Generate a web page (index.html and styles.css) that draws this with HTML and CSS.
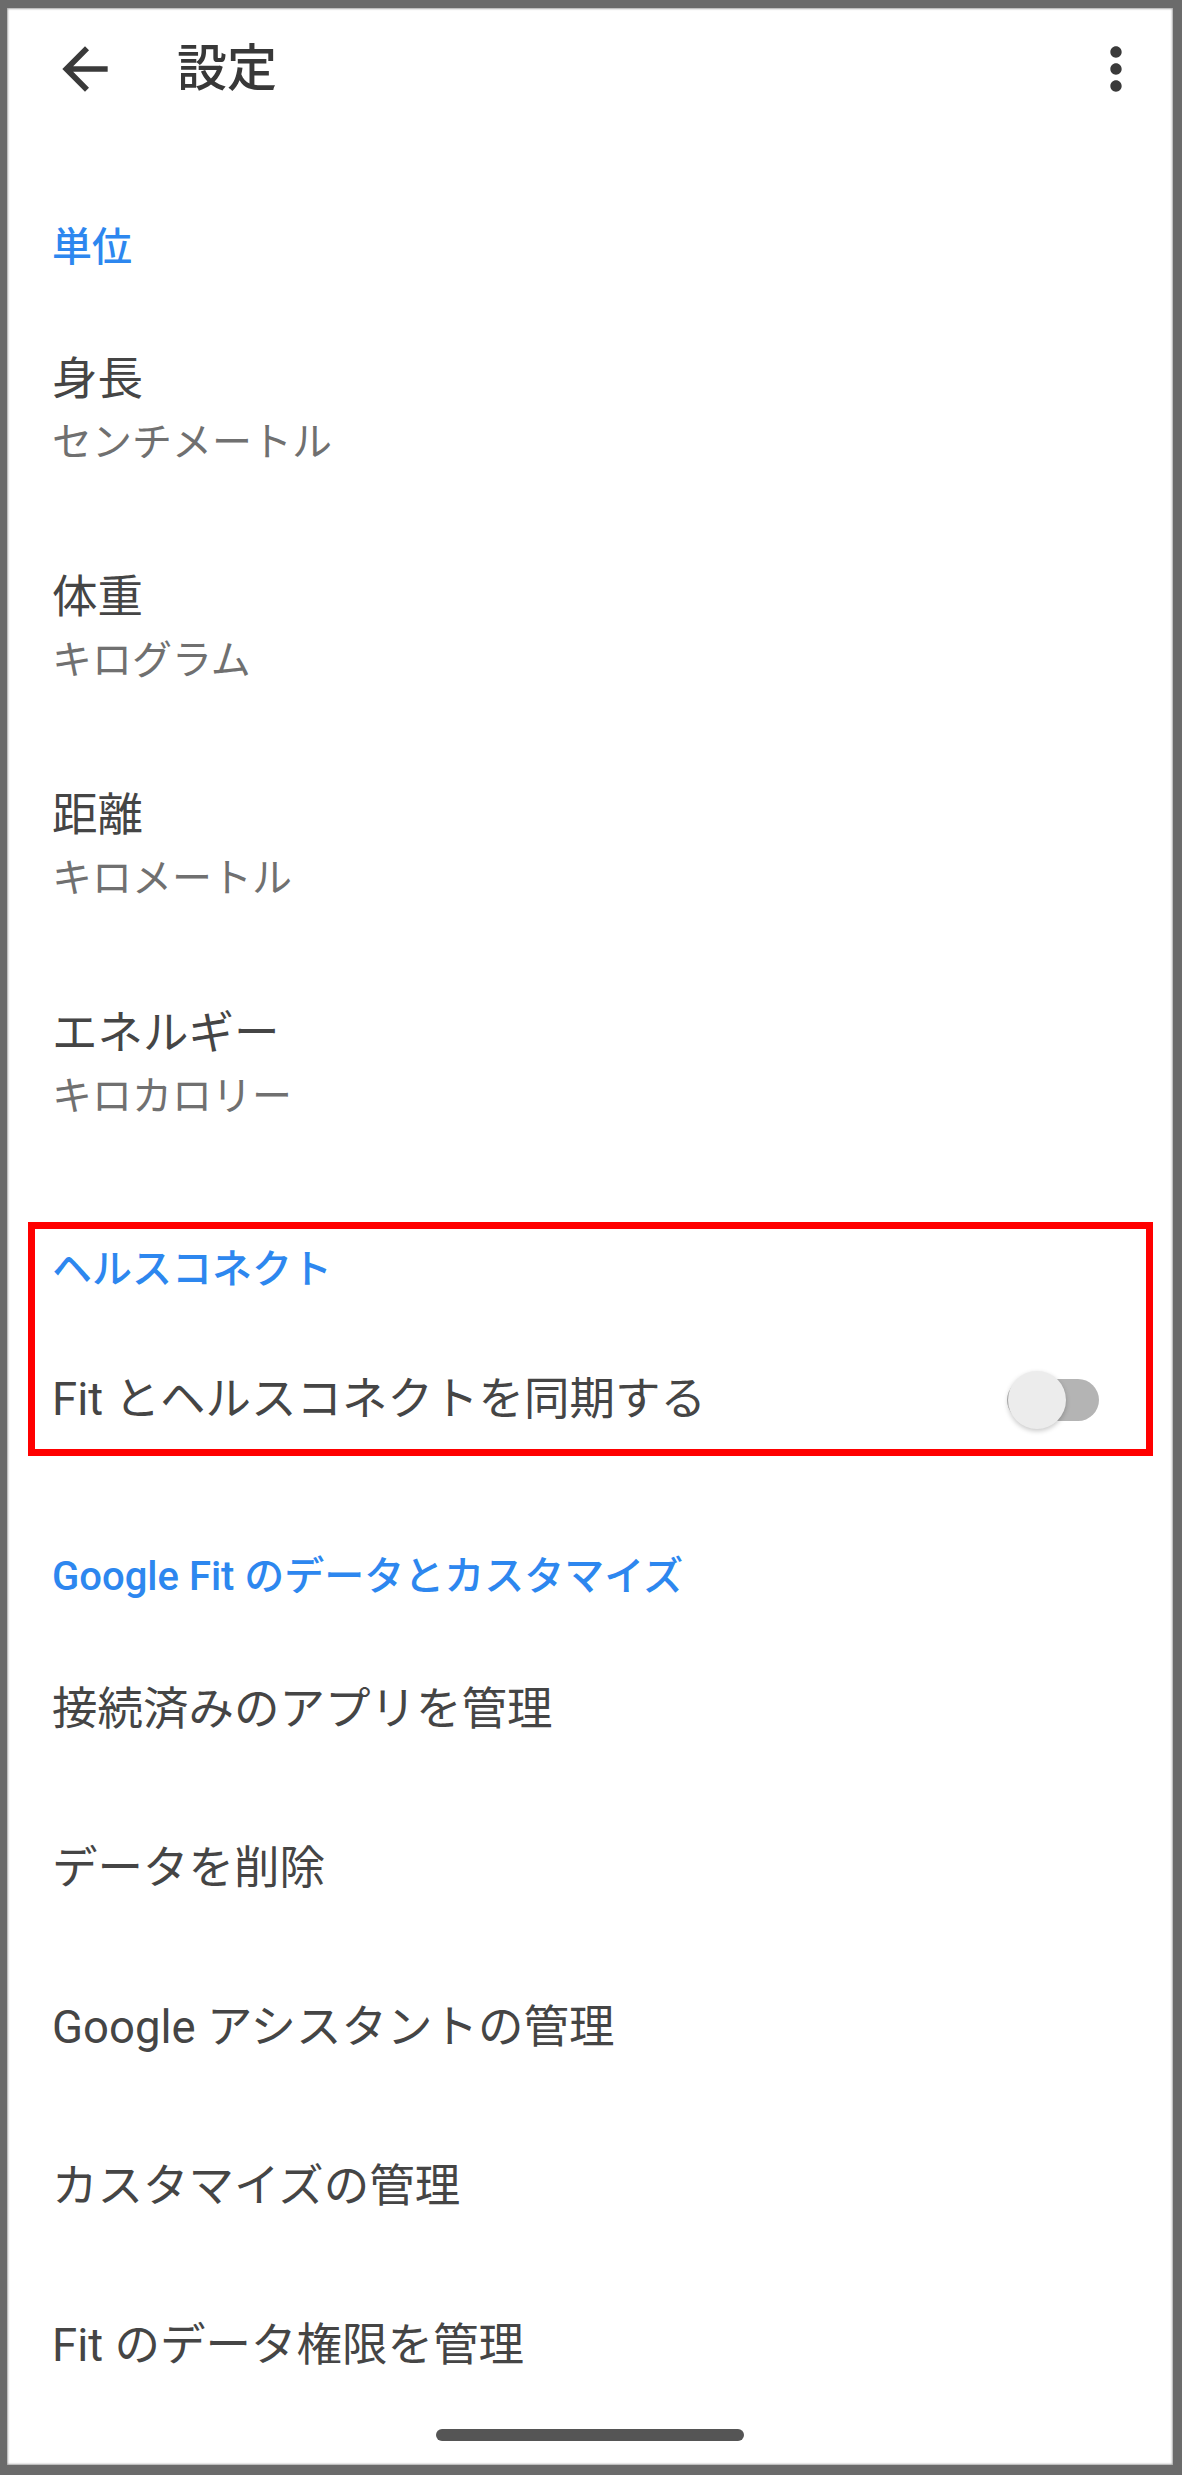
FILE: index.html
```html
<!DOCTYPE html>
<html lang="ja">
<head>
<meta charset="utf-8">
<title>設定</title>
<link rel="stylesheet" href="styles.css">
</head>
<body>
<div class="screen">
  <header class="toolbar">
    <svg class="icon back" viewBox="0 0 24 24" aria-hidden="true"><path d="M20 11H7.83l5.59-5.59L12 4l-8 8 8 8 1.41-1.41L7.83 13H20v-2z"/></svg>
    <h1 class="title">設定</h1>
    <svg class="icon more" viewBox="0 0 24 24" aria-hidden="true"><path d="M12 8c1.1 0 2-.9 2-2s-.9-2-2-2-2 .9-2 2 .9 2 2 2zm0 2c-1.1 0-2 .9-2 2s.9 2 2 2 2-.9 2-2-.9-2-2-2zm0 6c-1.1 0-2 .9-2 2s.9 2 2 2 2-.9 2-2-.9-2-2-2z"/></svg>
  </header>

  <div class="section-header first">単位</div>
  <div class="item two-line"><div class="primary">身長</div><div class="secondary">センチメートル</div></div>
  <div class="item two-line"><div class="primary">体重</div><div class="secondary">キログラム</div></div>
  <div class="item two-line"><div class="primary">距離</div><div class="secondary">キロメートル</div></div>
  <div class="item two-line"><div class="primary">エネルギー</div><div class="secondary">キロカロリー</div></div>

  <section class="highlight">
    <div class="hl-header">ヘルスコネクト</div>
    <div class="hl-row">
      <span class="primary">Fit とヘルスコネクトを同期する</span>
      <span class="switch"><span class="track"></span><span class="thumb"></span></span>
    </div>
  </section>

  <div class="section-header second">Google Fit のデータとカスタマイズ</div>
  <div class="item single first-single">接続済みのアプリを管理</div>
  <div class="item single">データを削除</div>
  <div class="item single">Google アシスタントの管理</div>
  <div class="item single">カスタマイズの管理</div>
  <div class="item single">Fit のデータ権限を管理</div>

  <div class="home-bar"></div>
</div>
</body>
</html>
```

FILE: styles.css
```css
html, body {
  margin: 0;
  padding: 0;
  background: #ffffff;
}

body {
  font-family: Roboto, "Noto Sans CJK JP", sans-serif;
}

.screen {
  width: 1182px;
  height: 2475px;
  box-sizing: border-box;
  border-style: solid;
  border-color: #6b6b6b;
  border-width: 8px 9px 10px 7px;
  box-shadow: inset 0 0 2px 1px #a8a8a8;
  background: #ffffff;
  display: flex;
  flex-direction: column;
}

.toolbar {
  height: 122px;
  display: flex;
  align-items: center;
  padding: 0 23px 0 44px;
  flex-shrink: 0;
}

.icon {
  width: 68px;
  height: 68px;
  fill: #3a3a3a;
  flex-shrink: 0;
}

.title {
  margin: 0 0 0 58px;
  font-size: 50px;
  font-weight: 500;
  color: #383838;
  line-height: 1;
  flex: 1;
}

.section-header {
  height: 80px;
  line-height: 80px;
  padding-left: 45px;
  font-size: 40px;
  font-weight: 500;
  color: #2d87ef;
  flex-shrink: 0;
}

.section-header.first {
  margin-top: 78px;
}

.section-header.second {
  margin-top: 81px;
}

.item {
  padding-left: 45px;
  flex-shrink: 0;
}

.two-line {
  height: 218px;
  box-sizing: border-box;
  padding-top: 62px;
}

.primary {
  font-size: 45.5px;
  color: #454545;
  line-height: 60px;
}

.secondary {
  font-size: 40px;
  color: #707070;
  line-height: 66px;
}

.single {
  height: 159px;
  line-height: 159px;
  font-size: 45.5px;
  color: #454545;
}

.first-single {
  margin-top: 13px;
}

.highlight {
  margin: 62px 0 0 21px;
  width: 1125px;
  box-sizing: border-box;
  border: 7px solid #ff0000;
  flex-shrink: 0;
}

.hl-header {
  height: 82px;
  line-height: 82px;
  padding-left: 17px;
  font-size: 40px;
  font-weight: 500;
  color: #2d87ef;
}

.hl-row {
  height: 138px;
  box-sizing: border-box;
  padding: 40px 47px 0 17px;
  display: flex;
  align-items: center;
  justify-content: space-between;
}

.switch {
  position: relative;
  width: 100px;
  height: 60px;
  flex-shrink: 0;
}

.track {
  position: absolute;
  right: 0;
  top: 9px;
  width: 92px;
  height: 42px;
  border-radius: 21px;
  background: #b4b4b4;
}

.thumb {
  position: absolute;
  left: 9px;
  top: 1px;
  width: 58px;
  height: 58px;
  border-radius: 50%;
  background: #ececec;
  box-shadow: 0 2px 5px rgba(0, 0, 0, 0.22);
}

.home-bar {
  margin-top: auto;
  margin-bottom: 24px;
  align-self: center;
  width: 308px;
  height: 12px;
  border-radius: 6px;
  background: #555555;
  flex-shrink: 0;
}
```
